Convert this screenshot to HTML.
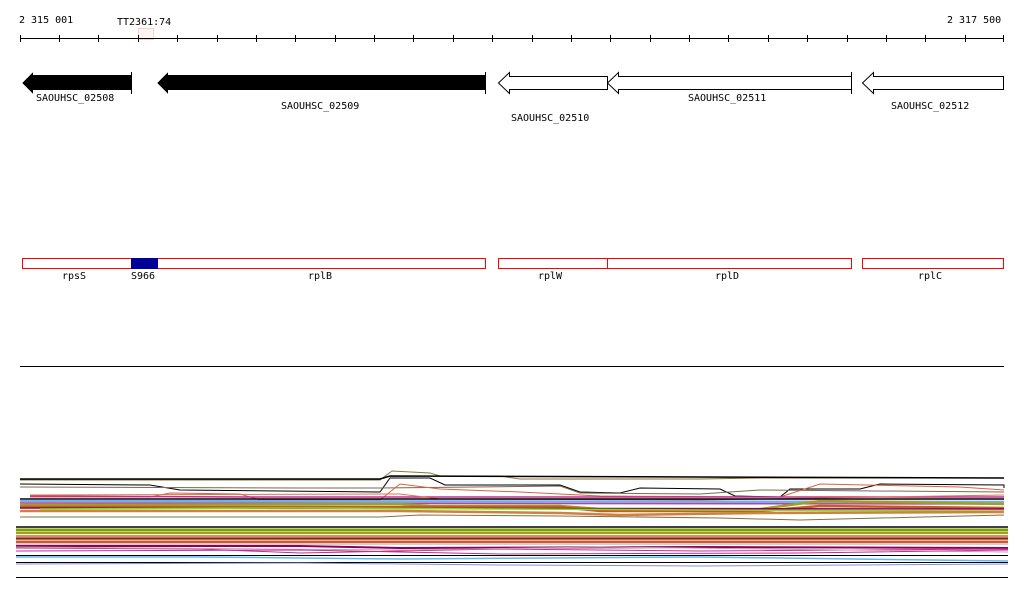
<!DOCTYPE html>
<html><head><meta charset="utf-8"><style>
html,body{margin:0;padding:0;background:#fff;width:1024px;height:611px;overflow:hidden}
svg text{font-family:"DejaVu Sans Mono","Liberation Mono",monospace;font-size:10px;fill:#000}
</style></head><body>
<svg width="1024" height="611" viewBox="0 0 1024 611" xmlns="http://www.w3.org/2000/svg" shape-rendering="crispEdges">
<text x="19" y="23">2 315 001</text>
<text x="117" y="25">TT2361:74</text>
<text x="947" y="23">2 317 500</text>
<rect x="138.5" y="28.5" width="15" height="11" fill="#fff6f4" stroke="#f4d0c8"/>
<line x1="20" y1="38.5" x2="1004" y2="38.5" stroke="#000"/>
<g stroke="#000">
<line x1="20.5" y1="35" x2="20.5" y2="42"/><line x1="59.5" y1="35" x2="59.5" y2="42"/><line x1="98.5" y1="35" x2="98.5" y2="42"/><line x1="138.5" y1="35" x2="138.5" y2="42"/><line x1="177.5" y1="35" x2="177.5" y2="42"/><line x1="217.5" y1="35" x2="217.5" y2="42"/><line x1="256.5" y1="35" x2="256.5" y2="42"/><line x1="295.5" y1="35" x2="295.5" y2="42"/><line x1="335.5" y1="35" x2="335.5" y2="42"/><line x1="374.5" y1="35" x2="374.5" y2="42"/><line x1="413.5" y1="35" x2="413.5" y2="42"/><line x1="453.5" y1="35" x2="453.5" y2="42"/><line x1="492.5" y1="35" x2="492.5" y2="42"/><line x1="532.5" y1="35" x2="532.5" y2="42"/><line x1="571.5" y1="35" x2="571.5" y2="42"/><line x1="610.5" y1="35" x2="610.5" y2="42"/><line x1="650.5" y1="35" x2="650.5" y2="42"/><line x1="689.5" y1="35" x2="689.5" y2="42"/><line x1="728.5" y1="35" x2="728.5" y2="42"/><line x1="768.5" y1="35" x2="768.5" y2="42"/><line x1="807.5" y1="35" x2="807.5" y2="42"/><line x1="847.5" y1="35" x2="847.5" y2="42"/><line x1="886.5" y1="35" x2="886.5" y2="42"/><line x1="925.5" y1="35" x2="925.5" y2="42"/><line x1="965.5" y1="35" x2="965.5" y2="42"/><line x1="1003.5" y1="35" x2="1003.5" y2="42"/>
</g>
<polygon points="22,83 33,72 33,75 131,75 131,90 33,90 33,94" fill="#000"/>
<line x1="131.5" y1="72" x2="131.5" y2="94" stroke="#000"/>
<polygon points="157,83 168,72 168,75 485,75 485,90 168,90 168,94" fill="#000"/>
<line x1="485.5" y1="72" x2="485.5" y2="94" stroke="#000"/>
<polygon points="498.5,83 509.5,72.5 509.5,76.5 607.5,76.5 607.5,89.5 509.5,89.5 509.5,93.5" fill="#fff" stroke="#000" shape-rendering="auto"/>
<polygon points="607.5,83 618.5,72.5 618.5,76.5 851.5,76.5 851.5,89.5 618.5,89.5 618.5,93.5" fill="#fff" stroke="#000" shape-rendering="auto"/>
<line x1="851.5" y1="72" x2="851.5" y2="94" stroke="#000"/>
<polygon points="862.5,83 873.5,72.5 873.5,76.5 1003.5,76.5 1003.5,89.5 873.5,89.5 873.5,93.5" fill="#fff" stroke="#000" shape-rendering="auto"/>
<text x="36" y="101">SAOUHSC_02508</text>
<text x="281" y="109">SAOUHSC_02509</text>
<text x="511" y="121">SAOUHSC_02510</text>
<text x="688" y="101">SAOUHSC_02511</text>
<text x="891" y="109">SAOUHSC_02512</text>
<g fill="none" stroke="#f00">
<rect x="22.5" y="258.5" width="463" height="10"/>
<rect x="498.5" y="258.5" width="109" height="10"/>
<rect x="607.5" y="258.5" width="244" height="10"/>
<rect x="862.5" y="258.5" width="141" height="10"/>
</g>
<rect x="131" y="258" width="27" height="11" fill="#000099"/>
<text x="62" y="279">rpsS</text>
<text x="131" y="279">S966</text>
<text x="308" y="279">rplB</text>
<text x="538" y="279">rplW</text>
<text x="715" y="279">rplD</text>
<text x="918" y="279">rplC</text>
<line x1="20" y1="366.5" x2="1004" y2="366.5" stroke="#000"/>
<line x1="16" y1="577.5" x2="1008" y2="577.5" stroke="#000"/>
<g fill="none" stroke-width="1" shape-rendering="auto">
<polyline stroke="#8a7a30" points="20,480 380,480 392,471 430,473 440,476 500,476 520,479 700,479 760,478 1004,478"/>
<polyline stroke="#000" stroke-width="1.5" points="20,479 380,479 390,476 1004,478"/>
<polyline stroke="#000" points="20,484 150,485 180,490 380,492 390,478 430,478 445,485 560,485 580,492 620,493 640,488 720,489 735,496 780,497 790,489 860,489 880,484 1004,485 1004,488"/>
<polyline stroke="#7a6a50" points="20,487 300,488 380,488 560,486 580,493 700,494 760,490 1004,492"/>
<polyline stroke="#e06040" points="30,497 150,497 170,493 240,494 260,500 380,500 400,484 440,489 520,492 600,496 780,497 820,484 960,487 1004,490"/>
<polyline stroke="#c03090" stroke-width="1.5" points="30,496 250,497 400,497 600,497 1004,497"/>
<polyline stroke="#e07050" points="30,495 400,494 440,499 700,500 1004,495"/>
<polyline stroke="#000" stroke-width="1.5" points="20,499 1004,499"/>
<polyline stroke="#70b0f0" stroke-width="2.5" points="20,501 1004,502"/>
<polyline stroke="#c040a0" stroke-width="1.5" points="20,503 1004,504"/>
<polyline stroke="#a0a020" stroke-width="2.5" points="20,505 400,504 430,506 560,506 600,509 760,509 820,501 1004,504"/>
<polyline stroke="#c06020" stroke-width="2.5" points="20,507 400,507 560,507 600,511 760,511 820,506 1004,508"/>
<polyline stroke="#900060" stroke-width="1.5" points="20,508 1004,509"/>
<polyline stroke="#80e020" stroke-width="1.5" points="40,509 300,508 500,509 700,510 1004,511"/>
<polyline stroke="#d08040" stroke-width="2.5" points="20,511 400,511 560,513 620,515 760,513 1004,512"/>
<polyline stroke="#807040" points="20,517 380,517 420,515 560,516 720,518 800,520 1004,515"/>
<polyline stroke="#000" stroke-width="1.5" points="16,527 1008,527"/>
<polyline stroke="#80a000" stroke-width="3" points="16,530 1008,530"/>
<polyline stroke="#a0a020" stroke-width="2" points="16,533 1008,533"/>
<polyline stroke="#ff8040" stroke-width="2" points="16,536 1008,536"/>
<polyline stroke="#c07030" stroke-width="3" points="16,539 1008,539"/>
<polyline stroke="#e05030" stroke-width="2" points="16,542 1008,542"/>
<polyline stroke="#000030" points="16,538 1008,538"/>
<polyline stroke="#a0a0a0" points="16,544 1008,544"/>
<polyline stroke="#900050" stroke-width="2" points="16,546 300,546 400,548 700,547 1008,548"/>
<polyline stroke="#c03090" points="16,548 200,549 300,553 500,549 700,551 1008,549"/>
<polyline stroke="#c0a0c0" points="16,547 400,550 600,547 1008,552"/>
<polyline stroke="#c03090" points="16,551 300,550 500,554 800,553 1008,550"/>
<polyline stroke="#000" points="16,555.5 1008,555.5"/>
<polyline stroke="#60b8f0" stroke-width="1.5" points="16,557 200,557 400,559 700,557 1008,561"/>
<polyline stroke="#000" points="16,562.5 1008,562.5"/>
<polyline stroke="#8090e0" points="16,564 300,563 500,565 700,566 1008,564"/>
</g>
</svg>
</body></html>
